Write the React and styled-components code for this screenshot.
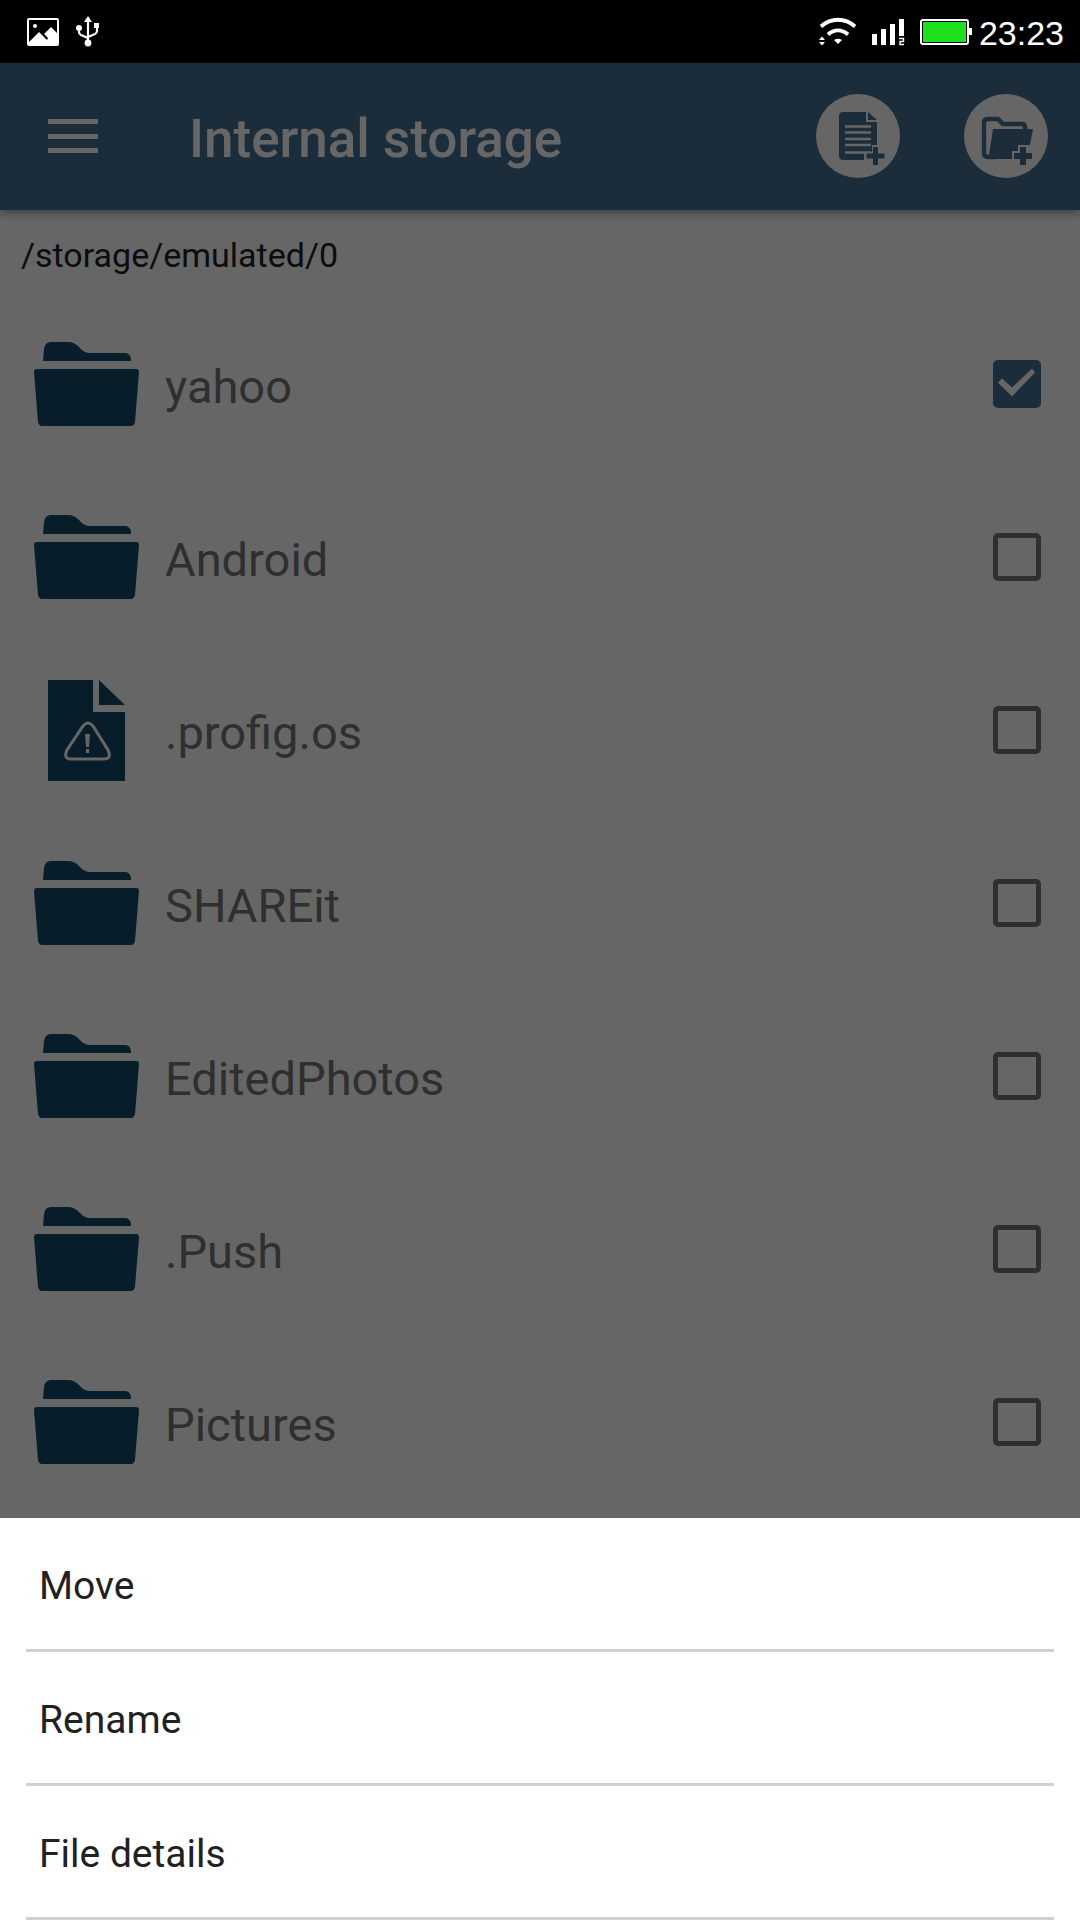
import React, { useState } from "react";
import styled, { createGlobalStyle } from "styled-components";

// Files and folders of the current directory
const entries = [
  { name: "yahoo", type: "folder" },
  { name: "Android", type: "folder" },
  { name: ".profig.os", type: "file" },
  { name: "SHAREit", type: "folder" },
  { name: "EditedPhotos", type: "folder" },
  { name: ".Push", type: "folder" },
  { name: "Pictures", type: "folder" },
];

// Bottom sheet actions
const actions = ["Move", "Rename", "File details"];

const GlobalStyle = createGlobalStyle`
  * {
    box-sizing: border-box;
  }

  body {
    margin: 0;
    background: #ffffff;
    font-family: Roboto, "Noto Sans", sans-serif;
  }
`;

const Screen = styled.div`
  min-height: 100vh;
  display: flex;
  flex-direction: column;
`;

// Define system status bar
const StatusBar = styled.header`
  height: 63px;
  padding: 0 16px 0 26px;
  display: flex;
  align-items: center;
  justify-content: space-between;
  color: #ffffff;
  background: #000000;
`;

const StatusGroup = styled.div`
  display: flex;
  align-items: center;
  gap: ${({ $gap }) => $gap}px;
`;

const Clock = styled.time`
  margin-left: -8px;
  padding-top: 2px;
  font-family: "Liberation Sans", Arial, sans-serif;
  font-size: 34px;
  line-height: 40px;
`;

// Everything under the backdrop
const Content = styled.div`
  position: relative;
  flex: 1;
`;

const Backdrop = styled.div`
  position: absolute;
  inset: 0;
  z-index: 2;
  background: rgba(0, 0, 0, 0.6);
`;

const Toolbar = styled.div`
  position: relative;
  height: 147px;
  padding: 0 32px 1px 48px;
  display: flex;
  align-items: center;
  color: #ffffff;
  background: #447292;
  box-shadow: 0 3px 9px rgba(0, 0, 0, 0.4);
`;

const MenuButton = styled.button`
  width: 50px;
  height: 34px;
  padding: 0;
  border: 0;
  display: flex;
  flex-direction: column;
  justify-content: space-between;
  background: none;
`;

const MenuBar = styled.span`
  width: 100%;
  height: 5px;
  background: #ffffff;
`;

const Title = styled.h1`
  flex: 1;
  margin: 0 0 0 91px;
  padding-top: 5px;
  font-size: 53px;
  font-weight: 500;
  line-height: 64px;
`;

const ToolbarActions = styled.div`
  display: flex;
  gap: 64px;
`;

const RoundButton = styled.button`
  width: 84px;
  height: 84px;
  padding: 0;
  border: 0;
  border-radius: 50%;
  display: flex;
  color: #447292;
  background: #ffffff;
`;

const Path = styled.p`
  margin: 0;
  padding: 25px 21px 22px;
  font-size: 34px;
  line-height: 40px;
  color: #212121;
`;

const FileList = styled.ul`
  margin: 0;
  padding: 0;
  list-style: none;
`;

const FileRow = styled.li`
  height: 173px;
  padding: 0 39px 0 34px;
  display: flex;
  align-items: center;
  gap: 26px;
`;

const FileName = styled.label`
  flex: 1;
  padding-top: 7px;
  font-size: 47px;
  line-height: 56px;
  color: #757575;
`;

const Checkbox = styled.input`
  appearance: none;
  width: 48px;
  height: 48px;
  margin: 0;
  border: 5px solid #757575;
  border-radius: 5px;

  &:checked {
    border: 0;
    background: #447292;
  }

  &:checked::before {
    content: "";
    display: block;
    width: 48px;
    height: 48px;
    background: #ffffff;
    clip-path: polygon(5px 23px, 9px 19px, 19px 28px, 39px 9px, 42px 13px, 19px 37px);
  }
`;

// Define bottom sheet
const Sheet = styled.div`
  position: sticky;
  bottom: 0;
  z-index: 3;
  padding: 0 26px;
  background: #ffffff;
`;

const SheetButton = styled.button`
  display: block;
  width: 100%;
  height: 134px;
  padding: 4px 13px 0;
  border: 0;
  border-bottom: 3px solid #d0d0d0;
  text-align: left;
  font-family: inherit;
  font-size: 39px;
  line-height: 48px;
  color: #212121;
  background: none;
`;

const PictureIcon = () => (
  <svg width="33" height="30" viewBox="0 0 33 30">
    <rect x="2" y="2" width="30" height="26" rx="1" fill="none" stroke="currentColor" strokeWidth="2" />
    <circle cx="9" cy="9" r="2" fill="currentColor" />
    <path d="M3 25 L13 15 L21 23 L22 21 L18 17 L25 10 L31 16 V27 H3 Z" fill="currentColor" />
  </svg>
);

const UsbIcon = () => (
  <svg width="24" height="32" viewBox="0 0 24 32">
    <path
      d="M12 27 V4 M3 12 V16 Q3 18 5 19 L12 22 M21 9 V15 Q21 17 19 18 L12 21"
      fill="none"
      stroke="currentColor"
      strokeWidth="2.2"
      strokeLinejoin="round"
    />
    <path d="M12 0 L16 6 H8 Z M18 7 H23 V12 H18 Z" fill="currentColor" />
    <circle cx="3" cy="12" r="3" fill="currentColor" />
    <circle cx="12" cy="27" r="3.4" fill="currentColor" />
  </svg>
);

const WifiIcon = () => (
  <svg width="38" height="30" viewBox="0 0 38 30">
    <path
      d="M2 9.5 C12 0.5 26 0.5 36 9.5 M9 17.5 C15 12 23 12 29 17.5"
      fill="none"
      stroke="currentColor"
      strokeWidth="3.8"
    />
    <path d="M15 23 Q19 20.5 23 23 L19 27 Z" fill="currentColor" />
    <path d="M0 23 L3 19.5 L6 23 Z M0 25 L3 28.5 L6 25 Z" fill="currentColor" />
  </svg>
);

const SignalIcon = () => (
  <svg width="33" height="28" viewBox="0 0 33 28">
    <path
      d="M0 16 H5 V27 H0 Z M9 11 H14 V27 H9 Z M18 6 H23 V27 H18 Z M27 1 H32 V18 H27 Z"
      fill="currentColor"
    />
    <path d="M27 20.5 H31.5 V23.5 H28 V26.5 H32" fill="none" stroke="currentColor" strokeWidth="1.4" />
  </svg>
);

const BatteryIcon = () => (
  <svg width="52" height="28" viewBox="0 0 52 28">
    <rect x="1" y="2" width="47" height="24" rx="2" fill="none" stroke="currentColor" strokeWidth="2" />
    <rect x="3" y="4" width="43" height="20" fill="#1fe01f" />
    <rect x="49" y="10" width="3" height="7" fill="currentColor" />
  </svg>
);

const NewFileIcon = () => (
  <svg width="84" height="84" viewBox="0 0 84 84">
    <path
      d="M27 18 H50 V28 H61 V51 H56 V58 H48 V66 H27 Q23 66 23 62 V22 Q23 18 27 18 Z M52 18 L61 26 H52 Z"
      fill="currentColor"
    />
    <path d="M29 32.5 H55 M29 38.5 H55 M29 45 H55 M29 51 H55 M29 58.5 H55" stroke="#ffffff" strokeWidth="2.6" />
    <path d="M59.5 53 V71 M50.5 62 H68.5" stroke="currentColor" strokeWidth="5" />
  </svg>
);

const NewFolderIcon = () => (
  <svg width="84" height="84" viewBox="0 0 84 84">
    <path
      d="M61 36 V33 Q61 30 58 30 H39 L34 25 H24 Q20 25 20 29 V59 Q20 63 24 63 H32"
      fill="none"
      stroke="currentColor"
      strokeWidth="4.4"
    />
    <path d="M29 35 H69 L66 51 H54 V57 H48 V65 H22 V62 L25 61 Z" fill="currentColor" />
    <path d="M59 53 V71 M50 62 H68" stroke="currentColor" strokeWidth="6" />
  </svg>
);

const FolderIcon = () => (
  <svg width="105" height="88" viewBox="0 -2 105 88" fill="#124a6a">
    <path d="M9 19 L10 7 Q11 0 17 0 H34 Q40 0 45 5 Q50 11 56 11 H91 Q97 11 97 19 Z" />
    <path d="M3 27 H102 Q105 27 105 30 L101 80 Q100 84 97 84 H8 Q5 84 4 80 L0 30 Q0 27 3 27 Z" />
  </svg>
);

const FileIcon = () => (
  <svg width="105" height="104" viewBox="0 -2 105 104">
    <path d="M14 0 H59 V32 H91 V101 H14 Z M65 0 L91 25 H65 Z" fill="#124a6a" />
    <path
      d="M49 46 Q54 40 59 46 L74 70 Q78 79 70 79 H37 Q29 79 33 70 Z"
      fill="none"
      stroke="#ffffff"
      strokeWidth="3"
    />
    <path d="M51 54 H56 L55 67 H52 Z M52 69 H55 V73 H52 Z" fill="#ffffff" />
  </svg>
);

export default function App() {
  const [selected, setSelected] = useState(["yahoo"]);

  // Add or remove an entry from the selection
  const toggle = (name) => {
    setSelected((prev) => (prev.includes(name) ? prev.filter((item) => item !== name) : [...prev, name]));
  };

  return (
    <Screen>
      <GlobalStyle />
      <StatusBar>
        <StatusGroup $gap={17}>
          <PictureIcon />
          <UsbIcon />
        </StatusGroup>
        <StatusGroup $gap={15}>
          <WifiIcon />
          <SignalIcon />
          <BatteryIcon />
          <Clock>23:23</Clock>
        </StatusGroup>
      </StatusBar>
      <Content>
        <Toolbar>
          <MenuButton aria-label="Open menu">
            <MenuBar />
            <MenuBar />
            <MenuBar />
          </MenuButton>
          <Title>Internal storage</Title>
          <ToolbarActions>
            <RoundButton aria-label="New file">
              <NewFileIcon />
            </RoundButton>
            <RoundButton aria-label="New folder">
              <NewFolderIcon />
            </RoundButton>
          </ToolbarActions>
        </Toolbar>
        <Path>/storage/emulated/0</Path>
        <FileList>
          {entries.map(({ name, type }) => (
            <FileRow key={name}>
              {type === "folder" ? <FolderIcon /> : <FileIcon />}
              <FileName htmlFor={name}>{name}</FileName>
              <Checkbox
                id={name}
                type="checkbox"
                checked={selected.includes(name)}
                onChange={() => toggle(name)}
              />
            </FileRow>
          ))}
        </FileList>
        <Backdrop />
      </Content>
      <Sheet>
        {actions.map((action) => (
          <SheetButton key={action}>{action}</SheetButton>
        ))}
      </Sheet>
    </Screen>
  );
}
